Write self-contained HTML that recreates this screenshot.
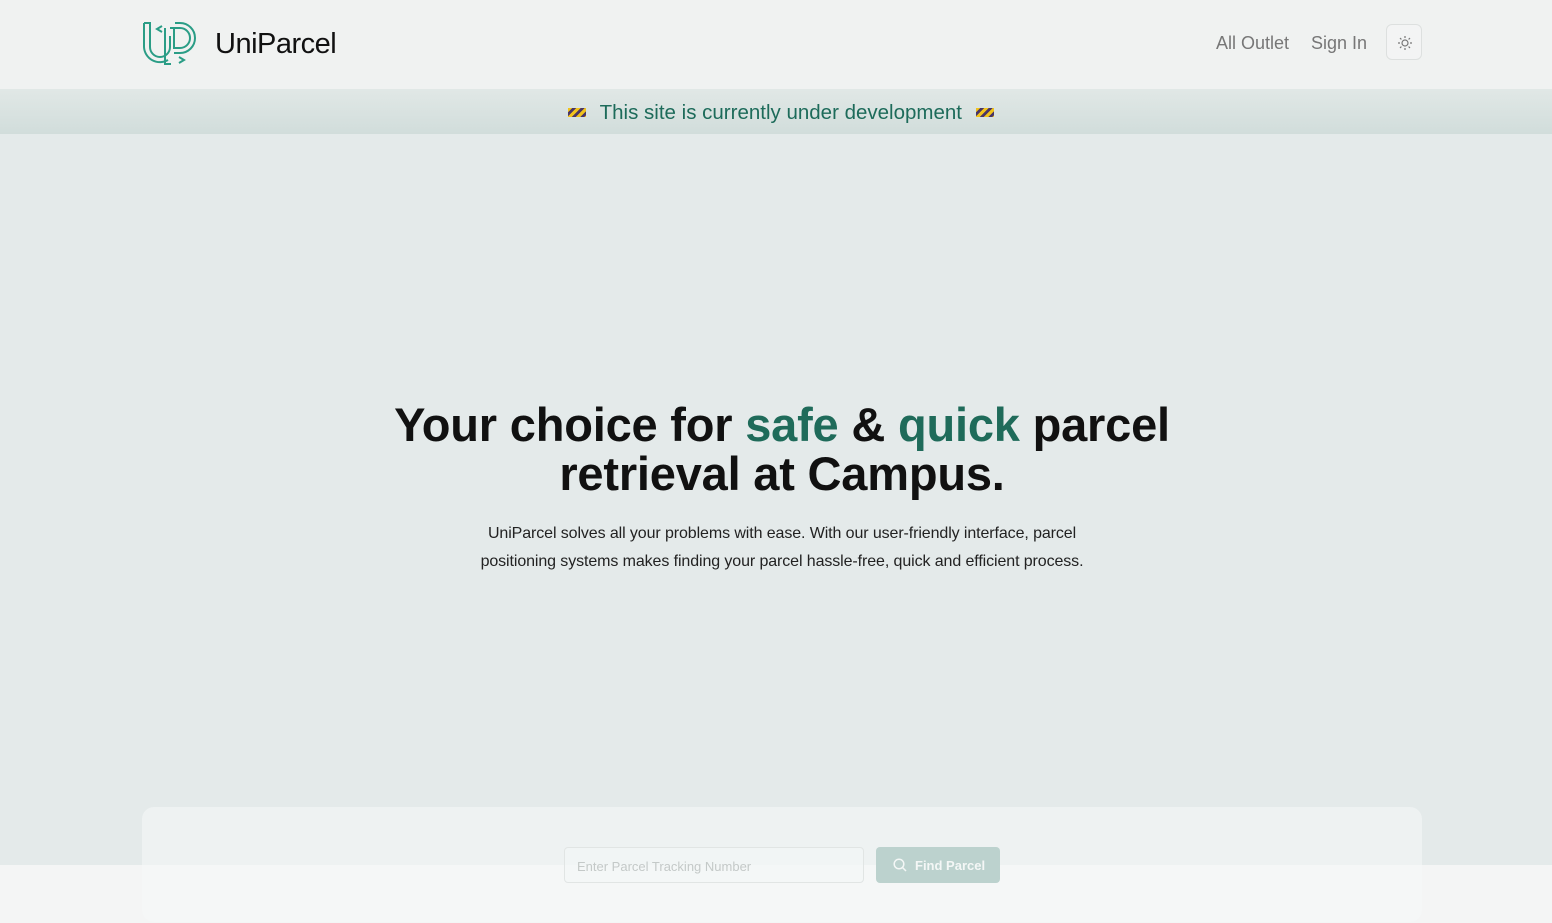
<!DOCTYPE html>
<html><head><meta charset="utf-8"><style>
*{margin:0;padding:0;box-sizing:border-box}
body{width:1552px;height:923px;overflow:hidden;font-family:"Liberation Sans",sans-serif;background:#f4f5f5;position:relative}
.hdr{position:absolute;left:0;top:0;width:1552px;height:89px;background:#f0f2f1}
.logo{position:absolute;left:143px;top:22px}
.brand{position:absolute;left:215px;top:28px;font-size:29px;color:#111;letter-spacing:-0.5px}
.nav{position:absolute;top:33px;font-size:18px;color:#777}
.tgl{position:absolute;left:1386px;top:24px;width:36px;height:36px;border:1px solid #dde0df;border-radius:6px;background:#f3f4f4}
.ban{position:absolute;left:0;top:89px;width:1552px;height:45px;background:linear-gradient(#e1e8e6,#d1dddb);text-align:center;font-size:20.5px;color:#1d6b5a;line-height:48px;padding-left:10px}
.main{position:absolute;left:0;top:134px;width:1552px;height:731px;background:#e4eaea}
h1{position:absolute;left:0;width:1552px;top:400px;text-align:center;font-size:47px;line-height:49px;font-weight:bold;color:#111;letter-spacing:-0.2px;padding-left:12px}
h1 span{color:#1f6b5a}
p{position:absolute;left:6px;width:1552px;top:520px;text-align:center;font-size:16px;line-height:28px;color:#222;letter-spacing:-0.1px}
.card{position:absolute;left:142px;top:807px;width:1280px;height:115px;border-radius:12px;background:rgba(245,247,247,0.55)}
.inp{position:absolute;left:564px;top:847px;width:300px;height:36px;border:1px solid #e1e5e4;border-radius:4px;background:rgba(244,246,246,.6);font-size:13px;color:#c4c9c8;padding:11px 12px}
.btn{position:absolute;left:876px;top:847px;width:124px;height:36px;border-radius:4px;background:#bcd2ce;color:#f4f7f6;font-size:13px;font-weight:bold;padding:11px 0 0 39px}
.stripe{display:inline-block;width:18px;height:9px;background:repeating-linear-gradient(135deg,#f1c21b 0 3px,#4a3566 3px 6px);vertical-align:2px;margin:0 8px}
</style></head><body>
<div class="hdr"></div>
<svg class="logo" width="54" height="44" viewBox="0 0 54 44" fill="none" stroke="#2a9d86" stroke-width="2">
<path d="M1 1h6v24a10 10 0 0 0 20 0V14"/><path d="M1 1v24a16 16 0 0 0 24 13"/>
<path d="M22 6v36h6"/><path d="M27 6h10a10 10 0 0 1 0 20h-6v-20"/><path d="M32 1h5a15 15 0 0 1 0 30h-6"/>
<path d="M19 4l-5 3 5 3"/><path d="M36 35l5 3-5 3"/></svg>
<div class="brand">UniParcel</div>
<div class="nav" style="left:1216px">All Outlet</div>
<div class="nav" style="left:1311px">Sign In</div>
<div class="tgl"><svg width="36" height="36" viewBox="0 0 36 36" stroke="#777" stroke-width="1.2" fill="none"><circle cx="18" cy="18" r="3"/><path d="M18 11v2M18 23v2M11 18h2M23 18h2M13 13l1.4 1.4M21.6 21.6L23 23M13 23l1.4-1.4M21.6 14.4L23 13"/></svg></div>
<div class="ban"><span class="stripe"></span> This site is currently under development <span class="stripe"></span></div>
<div class="main"></div>
<h1>Your choice for <span>safe</span> &amp; <span>quick</span> parcel<br>retrieval at Campus.</h1>
<p>UniParcel solves all your problems with ease. With our user-friendly interface, parcel<br>positioning systems makes finding your parcel hassle-free, quick and efficient process.</p>
<div class="card"></div>
<div class="inp">Enter Parcel Tracking Number</div>
<div class="btn"><svg style="position:absolute;left:17px;top:11px" width="14" height="14" viewBox="0 0 14 14" fill="none" stroke="#f4f7f6" stroke-width="1.5"><circle cx="6" cy="6" r="4.8"/><path d="M9.5 9.5L13 13"/></svg>Find Parcel</div>
</body></html>
